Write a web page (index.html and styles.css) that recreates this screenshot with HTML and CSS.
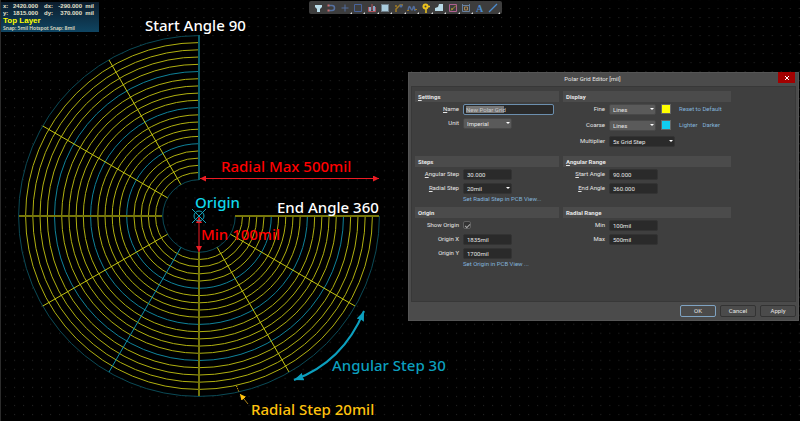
FILE: index.html
```
<!DOCTYPE html>
<html lang="en">
<head>
<meta charset="utf-8">
<title>Polar Grid Editor</title>
<link rel="stylesheet" href="styles.css">
</head>
<body>
<main class="board">
  <svg class="canvas" width="800" height="421" role="img" aria-label="Polar grid">
    <defs>
      <pattern id="dots" x="5" y="8" width="9.02" height="9.02" patternUnits="userSpaceOnUse">
        <rect width="1" height="1" fill="#262626"/>
      </pattern>
      <marker id="red" viewBox="0 0 6 6" refX="6" refY="3" markerWidth="6" markerHeight="6" markerUnits="userSpaceOnUse" orient="auto-start-reverse"><path d="M0 0L6 3L0 6Z" fill="#ed1c24"/></marker>
      <marker id="teal" viewBox="0 0 10 8" refX="10" refY="4" markerWidth="10" markerHeight="8" markerUnits="userSpaceOnUse" orient="auto-start-reverse"><path d="M0 0L10 4L0 8L1 4Z" fill="#0c9fbe"/></marker>
      <marker id="amber" viewBox="0 0 6 6" refX="6" refY="3" markerWidth="6" markerHeight="6" markerUnits="userSpaceOnUse" orient="auto"><path d="M0 0L6 3L0 6Z" fill="#ffc20e"/></marker>
    </defs>
    <rect width="100%" height="100%" fill="url(#dots)"/>
    <circle class="mask" cx="199" cy="216" r="108" pathLength="4"/>
    <g class="fine">
      <circle cx="199" cy="216" r="43.5" pathLength="4"/><circle cx="199" cy="216" r="50.7" pathLength="4"/>
      <circle cx="199" cy="216" r="57.9" pathLength="4"/><circle cx="199" cy="216" r="65.1" pathLength="4"/>
      <circle cx="199" cy="216" r="79.6" pathLength="4"/><circle cx="199" cy="216" r="86.8" pathLength="4"/>
      <circle cx="199" cy="216" r="94" pathLength="4"/><circle cx="199" cy="216" r="101.2" pathLength="4"/>
      <circle cx="199" cy="216" r="115.7" pathLength="4"/><circle cx="199" cy="216" r="122.9" pathLength="4"/>
      <circle cx="199" cy="216" r="130.1" pathLength="4"/><circle cx="199" cy="216" r="137.3" pathLength="4"/>
      <circle cx="199" cy="216" r="151.7" pathLength="4"/><circle cx="199" cy="216" r="159" pathLength="4"/>
      <circle cx="199" cy="216" r="166.2" pathLength="4"/><circle cx="199" cy="216" r="173.4" pathLength="4"/>
    </g>
    <g class="coarse">
      <circle cx="199" cy="216" r="72.3" pathLength="4"/>
      <circle cx="199" cy="216" r="108.4" pathLength="4"/>
      <circle cx="199" cy="216" r="144.5" pathLength="4"/>
    </g>
    <g class="edge">
      <circle cx="199" cy="216" r="36.3" pathLength="4"/>
      <circle cx="199" cy="216" r="180.4" pathLength="4"/>
    </g>
    <g class="spoke">
      <path d="M180.9 184.6L109 60M167.6 197.9L42.8 126M167.6 234.2L42.8 306M217.2 247.4L289 372M230.4 234.2L355 306"/>
    </g>
    <path class="spoke-coarse" d="M180.9 247.4L109 372"/>
    <path class="axis" d="M19 216H162M199 252V396M235 216H379"/>
    <path class="axis-start" d="M199 35V180"/>
    <path class="dim-red" d="M200 178.500H379"/>
    <path class="dim-red" d="M199 217V252"/>
    <g class="origin"><circle cx="199" cy="216" r="5"/><path d="M192 209L206 223M206 209L192 223"/></g>
    <path class="dim-teal" d="M294 380Q343 362 364 311"/>
    <path class="dim-amber" d="M248 404L240 394"/>
    <path class="tick" d="M236.500 386L239 392"/>
    <g class="note">
      <text x="145" y="31" fill="#fff">Start Angle 90</text>
      <text x="221" y="172" fill="#f00">Radial Max 500mil</text>
      <text x="195" y="208" fill="#10d8ec">Origin</text>
      <text x="277" y="213" fill="#fff">End Angle 360</text>
      <text x="201" y="240" fill="#f00">Min 100mil</text>
      <text x="332" y="371" fill="#0c9fbe">Angular Step 30</text>
      <text x="251" y="415" fill="#ffc20e">Radial Step 20mil</text>
    </g>
  </svg>

  <aside class="hud">
    <dl class="coords">
      <dt>x:</dt><dd>2420.000</dd><dt>dx:</dt><dd>-290.000</dd><dd>mil</dd>
      <dt>y:</dt><dd>1815.000</dd><dt>dy:</dt><dd>370.000</dd><dd>mil</dd>
    </dl>
    <p class="layer">Top Layer</p>
    <p class="snap">Snap: 5mil Hotspot Snap: 8mil</p>
  </aside>

  <nav class="toolbar" aria-label="Active bar">
    <button aria-label="Filter"><svg viewBox="0 0 12 12"><path fill="#b9dbe8" d="M3 3h7v2L8 7v3H5V7L3 5z"/></svg></button>
    <button aria-label="Snap"><svg viewBox="0 0 12 12"><path fill="none" stroke="#5470a0" stroke-width="1.500" d="M4 3.500h3a2.500 2.500 0 0 1 0 5H4"/><path stroke="#c86c6c" stroke-width="2" d="M2.500 3.500h2M2.500 8.500h2"/></svg></button>
    <button class="more" aria-label="Place"><svg viewBox="0 0 12 12"><path stroke="#526d9c" d="M6 2.500v7M2.500 6h7"/></svg></button>
    <button class="more" aria-label="Select"><svg viewBox="0 0 12 12"><path fill="none" stroke="#48639a" d="M2.500 2.500h7v7h-7z"/></svg></button>
    <button class="more" aria-label="Align"><svg viewBox="0 0 12 12"><path fill="#8aa8c8" d="M3 5h2v4H3zM7 4h2v5H7z"/><path fill="none" stroke="#b4535d" d="M2.500 5v4.500h7V5M6 2v6"/></svg></button>
    <button class="more" aria-label="Component"><svg viewBox="0 0 12 12"><rect x="2.500" y="2.500" width="7" height="7" fill="#a9cbdc" stroke="#71818c"/></svg></button>
    <button class="more" aria-label="Route"><svg viewBox="0 0 12 12"><path fill="none" stroke="#a27c25" stroke-width="1.500" d="M3 10V7l4-4h3M2 4h2"/><circle cx="8" cy="4" r="1.500" fill="#4e6ea0"/></svg></button>
    <button class="more" aria-label="Tune"><svg viewBox="0 0 12 12"><path fill="none" stroke="#526d9c" stroke-width="1.500" d="M2 9q1-7 2.500-3T7 6t2 3"/><path stroke="#a27c25" d="M1 8.500h2M9 7.500h2"/></svg></button>
    <button class="more" aria-label="Via"><svg viewBox="0 0 12 12"><circle cx="5.500" cy="4.500" r="3" fill="#edc31c"/><path stroke="#edc31c" stroke-width="1.500" d="M6 6v5M6 4.500h4"/><circle cx="5.500" cy="4.500" r="1" fill="#444"/></svg></button>
    <button class="more" aria-label="Polygon"><svg viewBox="0 0 12 12"><path fill="#b9dbe8" d="M2 6l3-1 1-3h4v7H2z"/></svg></button>
    <button class="more" aria-label="Keepout"><svg viewBox="0 0 12 12"><path fill="none" stroke="#b06091" d="M2.500 2.500h7v7h-7z"/><path stroke="#a68b35" d="M4 8.500l5-5"/><circle cx="5" cy="7" r="1" fill="#a68b35"/></svg></button>
    <button class="more" aria-label="Dimension"><svg viewBox="0 0 12 12"><path fill="none" stroke="#6680a0" d="M2.500 2v7.500h7V2M2 3.500h8"/><path fill="none" stroke="#a58454" d="M4.500 5h3v3h-3z"/></svg></button>
    <button aria-label="Text"><svg viewBox="0 0 12 12"><text class="glyph" x="2" y="10">A</text></svg></button>
    <button class="more" aria-label="Line"><svg viewBox="0 0 12 12"><path stroke="#4b8ccf" stroke-width="1.200" d="M2 10l8-8"/></svg></button>
  </nav>

  <form class="dialog" aria-label="Polar Grid Editor">
    <header class="titlebar">
      <h1>Polar Grid Editor [mil]</h1>
      <button type="button" class="close" aria-label="Close"><svg viewBox="0 0 6 6"><path d="M1 1l4 4M5 1L1 5"/></svg></button>
    </header>
    <div class="panel">
      <section>
        <h2><u>S</u>ettings</h2>
        <div class="rows">
          <div class="row"><label for="name"><u>N</u>ame</label><input id="name" class="wide" value="New Polar Grid"></div>
          <div class="row"><label for="unit">Unit</label><span class="pick light"><select id="unit"><option>Imperial</option></select></span></div>
        </div>
      </section>
      <section>
        <h2>Display</h2>
        <div class="rows loose">
          <div class="row"><label for="fine">Fine</label><span class="pick light"><select id="fine"><option>Lines</option></select></span><button type="button" class="swatch yellow" aria-label="Fine colour"></button><a href="#">Reset to Default</a></div>
          <div class="row"><label for="coarse">Coarse</label><span class="pick light"><select id="coarse"><option>Lines</option></select></span><button type="button" class="swatch cyan" aria-label="Coarse colour"></button><a href="#">Lighter</a><a href="#">Darker</a></div>
          <div class="row"><label for="mult">Multiplier</label><span class="pick long"><select id="mult"><option>5x Grid Step</option></select></span></div>
        </div>
      </section>
      <section>
        <h2>Steps</h2>
        <div class="rows">
          <div class="row"><label for="astep"><u>A</u>ngular Step</label><input id="astep" value="30.000"></div>
          <div class="row"><label for="rstep"><u>R</u>adial Step</label><span class="pick"><select id="rstep"><option>20mil</option></select></span></div>
        </div>
        <a class="below" href="#">Set Radial Step in PCB View...</a>
      </section>
      <section>
        <h2><u>A</u>ngular Range</h2>
        <div class="rows">
          <div class="row"><label for="start"><u>S</u>tart Angle</label><input id="start" value="90.000"></div>
          <div class="row"><label for="end"><u>E</u>nd Angle</label><input id="end" value="360.000"></div>
        </div>
      </section>
      <section>
        <h2>Origin</h2>
        <div class="rows">
          <div class="row"><label for="show">Show Origin</label><input id="show" type="checkbox" checked></div>
          <div class="row"><label for="ox">Origin X</label><input id="ox" value="1835mil"></div>
          <div class="row"><label for="oy">Origin Y</label><input id="oy" value="1700mil"></div>
        </div>
        <a class="below" href="#">Set Origin in PCB View ...</a>
      </section>
      <section>
        <h2>Radial Range</h2>
        <div class="rows">
          <div class="row"><label for="min">Min</label><input id="min" value="100mil"></div>
          <div class="row"><label for="max">Max</label><input id="max" value="500mil"></div>
        </div>
      </section>
    </div>
    <footer class="actions">
      <button type="button" class="primary">OK</button>
      <button type="button">Cancel</button>
      <button type="button">Apply</button>
    </footer>
  </form>
</main>
</body>
</html>
```
FILE: styles.css
```
* { box-sizing: border-box; }

body {
  margin: 0;
  background: #000;
  color: #e6e6e6;
  font: 6px/10px Roboto, "Open Sans", sans-serif;
}

h1, h2, p, dl, dd { margin: 0; }

button, input, select { font: inherit; color: inherit; }

.board {
  position: relative;
  min-height: 100vh;
  overflow: hidden;
  border-left: 1px solid #2c2c2c;
}

/* drawing */
.canvas { position: absolute; top: 0; left: -1px; }
.canvas circle { fill: none; stroke-dasharray: 3 1; }
.canvas .mask { stroke: #000; stroke-width: 142px; }
.fine { stroke: #b0b010; }
.coarse { stroke: #0f8299; }
.edge { stroke: #0b4a56; }
.spoke { stroke: #c4c412; }
.spoke-coarse { stroke: #0f8fa8; }
.axis { stroke: #77770a; stroke-width: 2px; }
.axis-start { stroke: #0a5f6c; stroke-width: 2px; }
.dim-red { stroke: #ed1c24; marker-start: url(#red); marker-end: url(#red); }
.dim-teal { fill: none; stroke: #0c9fbe; stroke-width: 2px; marker-start: url(#teal); marker-end: url(#teal); }
.dim-amber { stroke: #a9801a; marker-end: url(#amber); }
.tick { stroke: #ffc20e; stroke-dasharray: 1 1; }
.origin { fill: none; stroke: #12a5bd; }
.canvas .origin circle { stroke-dasharray: none; }
.note { font: 500 15px "Noto Sans", "Open Sans", sans-serif; }

/* heads-up display */
.hud {
  position: relative;
  width: 98px;
  height: 30px;
  margin-top: 2px;
  padding: 1px 2px 0;
  background: linear-gradient(#0c1c2c, #0f4562);
  color: #e6e2cc;
  font: bold 6px/7px "Liberation Sans", sans-serif;
}
.coords {
  display: grid;
  grid-template-columns: 8px 27px 14px 30px 12px;
}
.coords dt, .coords dd { text-align: right; }
.coords dt { text-align: left; }
.coords dt:nth-of-type(even) { padding-left: 6px; }
.layer { color: #ff0; font-size: 8px; line-height: 8px; }
.snap { font: 600 5px/6px "Open Sans", sans-serif; }

/* toolbar */
.toolbar {
  position: absolute;
  top: 1px;
  left: 308px;
  width: 193px;
  height: 13px;
  padding: 0 2px;
  display: grid;
  grid-template-columns: repeat(14, 1fr);
  background: #3d3d3d;
  border-radius: 2px;
}
.toolbar button {
  position: relative;
  display: grid;
  place-items: center;
  padding: 0;
  border: 0;
  background: none;
}
.toolbar svg { width: 12px; height: 12px; }
.toolbar .more::after {
  content: "";
  position: absolute;
  right: 0;
  bottom: 0;
  border: 1px solid;
  border-color: transparent #ddd #ddd transparent;
}
.glyph { font: bold 10px "Liberation Serif", serif; fill: #4b8ccf; }

/* dialog */
.dialog {
  position: absolute;
  top: 72px;
  left: 407px;
  right: 1px;
  padding: 0 3px;
  background: #4b4b4b;
  box-shadow: inset 0 0 0 1px #555;
}
.titlebar {
  display: flex;
  justify-content: center;
  height: 14px;
  padding-right: 22px;
}
.titlebar h1 { font-size: 6px; font-weight: 400; line-height: 14px; }
.close {
  position: absolute;
  top: 0;
  right: 4px;
  width: 17px;
  height: 11px;
  padding: 0;
  border: 0;
  background: #a30000;
  display: grid;
  place-items: center;
}
.close svg { width: 6px; height: 6px; stroke: #fff; }
.panel {
  display: grid;
  grid-template-columns: 144px 168px;
  grid-template-rows: 65px 51px auto;
  column-gap: 4px;
  height: 216px;
  padding: 4px 3px;
  background: #3f3f3f;
  border: 1px solid #383838;
}
.panel h2 {
  height: 11px;
  padding-left: 3px;
  background: #4b4b4b;
  font-size: 6px;
  line-height: 11px;
}
.rows { display: grid; gap: 4px; padding-top: 2px; }
.loose { gap: 6px; }
.row { display: flex; align-items: center; height: 10px; }
.row label { width: 44px; margin-right: 4px; text-align: right; }
section:nth-child(even) label { width: 42px; }
.row a { margin-right: 5px; }
a { color: #83b4dc; text-decoration: none; }
.below { display: block; padding: 1px 0 0 48px; }

input {
  width: 49px;
  height: 11px;
  padding: 0 3px;
  background: #2a2a2a;
  border: 1px solid #333;
  border-radius: 2px;
}
.wide {
  width: 91px;
  padding: 0 2px;
  color: #c8c8c8;
  background: linear-gradient(#777, #777) 2px 1px / 38px 7px no-repeat #2a2a2a;
  border-color: #6c8fae;
}
input[type="checkbox"] {
  appearance: none;
  display: grid;
  place-items: center;
  width: 8px;
  height: 8px;
  margin: 0;
  padding: 0;
  background: #333;
  border-color: #606060;
}
input[type="checkbox"]:checked::before {
  content: "";
  width: 4px;
  height: 2px;
  border: solid #aaa;
  border-width: 0 0 1px 1px;
  transform: rotate(-45deg);
}
.pick { position: relative; width: 49px; height: 11px; }
.pick.long { width: 66px; }
.pick select {
  appearance: none;
  display: block;
  width: 100%;
  height: 11px;
  padding: 0 3px;
  background: #2a2a2a;
  border: 1px solid #333;
  border-radius: 2px;
}
.pick.light select { background: #5a5a5a; border-color: #484848; }
.loose .light { width: 47px; }
.pick::after {
  content: "";
  position: absolute;
  top: 4px;
  right: 2px;
  border: 2px solid transparent;
  border-top-color: #fff;
}
.swatch {
  width: 10px;
  height: 10px;
  margin: 0 8px 0 5px;
  padding: 0;
  border: 1px solid #666;
}
.yellow { background: #ff0; }
.cyan { background: #12cdf0; }

.actions {
  display: flex;
  justify-content: flex-end;
  gap: 4px;
  padding: 3px 0 4px;
}
.actions button {
  width: 36px;
  height: 12px;
  padding: 0;
  background: #4b4b4b;
  border: 1px solid #333;
  border-radius: 2px;
}
.actions .primary { border-color: #7fa3c2; }
```
